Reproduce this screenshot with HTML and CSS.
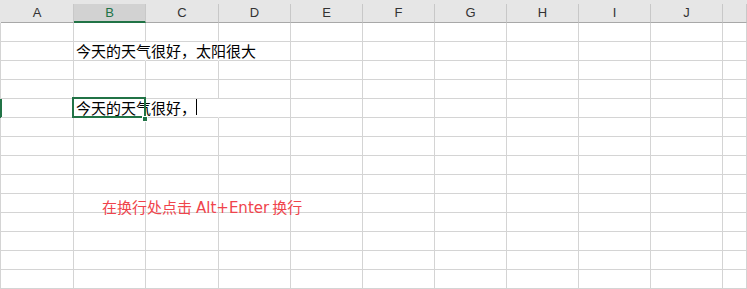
FILE: index.html
```html
<!DOCTYPE html>
<html lang="zh-CN">
<head>
    <meta charset="UTF-8">
    <title>Sheet1</title>
    <link rel="stylesheet" href="styles.css">
</head>
<body>
    <div class="sheet">
        <div class="row head">
            <div class="rh"></div>
            <div class="ch">A</div>
            <div class="ch sel">B</div>
            <div class="ch">C</div>
            <div class="ch">D</div>
            <div class="ch">E</div>
            <div class="ch">F</div>
            <div class="ch">G</div>
            <div class="ch">H</div>
            <div class="ch">I</div>
            <div class="ch">J</div>
            <div class="ch"></div>
        </div>

        <div class="row"><div class="rh"></div><div class="c"></div><div class="c"></div><div class="c"></div><div class="c"></div><div class="c"></div><div class="c"></div><div class="c"></div><div class="c"></div><div class="c"></div><div class="c"></div><div class="c"></div></div>
        <div class="row"><div class="rh"></div><div class="c"></div><div class="c spill">今天的天气很好，太阳很大</div><div class="c spill"></div><div class="c"></div><div class="c"></div><div class="c"></div><div class="c"></div><div class="c"></div><div class="c"></div><div class="c"></div><div class="c"></div></div>
        <div class="row"><div class="rh"></div><div class="c"></div><div class="c"></div><div class="c"></div><div class="c"></div><div class="c"></div><div class="c"></div><div class="c"></div><div class="c"></div><div class="c"></div><div class="c"></div><div class="c"></div></div>
        <div class="row"><div class="rh"></div><div class="c"></div><div class="c"></div><div class="c"></div><div class="c"></div><div class="c"></div><div class="c"></div><div class="c"></div><div class="c"></div><div class="c"></div><div class="c"></div><div class="c"></div></div>
        <div class="row active"><div class="rh"></div><div class="c"></div><div class="c spill editing">今天的天气很好，<span class="caret"></span><span class="handle"></span></div><div class="c spill"></div><div class="c"></div><div class="c"></div><div class="c"></div><div class="c"></div><div class="c"></div><div class="c"></div><div class="c"></div><div class="c"></div></div>
        <div class="row"><div class="rh"></div><div class="c"></div><div class="c"></div><div class="c"></div><div class="c"></div><div class="c"></div><div class="c"></div><div class="c"></div><div class="c"></div><div class="c"></div><div class="c"></div><div class="c"></div></div>
        <div class="row"><div class="rh"></div><div class="c"></div><div class="c"></div><div class="c"></div><div class="c"></div><div class="c"></div><div class="c"></div><div class="c"></div><div class="c"></div><div class="c"></div><div class="c"></div><div class="c"></div></div>
        <div class="row"><div class="rh"></div><div class="c"></div><div class="c"></div><div class="c"></div><div class="c"></div><div class="c"></div><div class="c"></div><div class="c"></div><div class="c"></div><div class="c"></div><div class="c"></div><div class="c"></div></div>
        <div class="row"><div class="rh"></div><div class="c"></div><div class="c"></div><div class="c"></div><div class="c"></div><div class="c"></div><div class="c"></div><div class="c"></div><div class="c"></div><div class="c"></div><div class="c"></div><div class="c"></div></div>
        <div class="row"><div class="rh"></div><div class="c"></div><div class="c"></div><div class="c"></div><div class="c"></div><div class="c"></div><div class="c"></div><div class="c"></div><div class="c"></div><div class="c"></div><div class="c"></div><div class="c"></div></div>
        <div class="row"><div class="rh"></div><div class="c"></div><div class="c"></div><div class="c"></div><div class="c"></div><div class="c"></div><div class="c"></div><div class="c"></div><div class="c"></div><div class="c"></div><div class="c"></div><div class="c"></div></div>
        <div class="row"><div class="rh"></div><div class="c"></div><div class="c"></div><div class="c"></div><div class="c"></div><div class="c"></div><div class="c"></div><div class="c"></div><div class="c"></div><div class="c"></div><div class="c"></div><div class="c"></div></div>
        <div class="row"><div class="rh"></div><div class="c"></div><div class="c"></div><div class="c"></div><div class="c"></div><div class="c"></div><div class="c"></div><div class="c"></div><div class="c"></div><div class="c"></div><div class="c"></div><div class="c"></div></div>
        <div class="row"><div class="rh"></div><div class="c"></div><div class="c"></div><div class="c"></div><div class="c"></div><div class="c"></div><div class="c"></div><div class="c"></div><div class="c"></div><div class="c"></div><div class="c"></div><div class="c"></div></div>

        <!-- text box floating over the grid -->
        <div class="note">在换行处点击<span class="latin">Alt+Enter</span>换行</div>
    </div>
</body>
</html>
```

FILE: styles.css
```css
body {
    margin: 0;
    background: #fff;
    overflow: hidden;
    font-family: "Noto Sans CJK SC", sans-serif;
}
.sheet {
    position: relative;
    width: 747px;
    height: 289px;
    overflow: hidden;
}
.row {
    display: grid;
    grid-template-columns: 1px 73px 72px 73px 72px 72px 72px 72px 72px 72px 72px 1fr;
}
.rh {
    background: #d4d4d4;
}
.row.active .rh {
    background: #217346;
    box-shadow: 1px 0 0 #217346;
}

/* column headers */
.head {
    background: #e6e6e6;
    padding-top: 4px;
}
.head .rh {
    background: #e6e6e6;
}
.ch {
    height: 17px;
    padding-top: 1px;
    line-height: 16px;
    border-right: 1px solid #c8c8c8;
    border-bottom: 1px solid #a8a8a8;
    font-family: "Liberation Sans", Arial, sans-serif;
    font-size: 13px;
    color: #333;
    text-align: center;
}
.ch.sel {
    background: #d2d2d2;
    color: #217346;
    border-bottom: 2px solid #217346;
    height: 16px;
}

/* cells */
.c {
    position: relative;
    height: 18px;
    padding-left: 2px;
    border-right: 1px solid #d4d4d4;
    border-bottom: 1px solid #d4d4d4;
    font-size: 15px;
    line-height: 18px;
    color: #000;
    white-space: nowrap;
}
.c.spill {
    border-right-color: transparent;
}
.c.editing::after {
    content: "";
    position: absolute;
    top: -2px;
    left: -2px;
    right: -1px;
    bottom: -1px;
    border: 2px solid #217346;
}
.caret {
    display: inline-block;
    width: 1px;
    height: 16px;
    background: #000;
    vertical-align: -1px;
}
.handle {
    position: absolute;
    left: 68px;
    top: 17px;
    width: 4px;
    height: 4px;
    background: #217346;
    border: 1px solid #fff;
    z-index: 1;
}

.note {
    position: absolute;
    left: 102px;
    top: 198px;
    font-size: 15px;
    line-height: 18px;
    color: #f0444c;
    white-space: nowrap;
}
.note .latin {
    font-family: "DejaVu Sans", sans-serif;
    padding: 0 3px 0 4px;
}
```
